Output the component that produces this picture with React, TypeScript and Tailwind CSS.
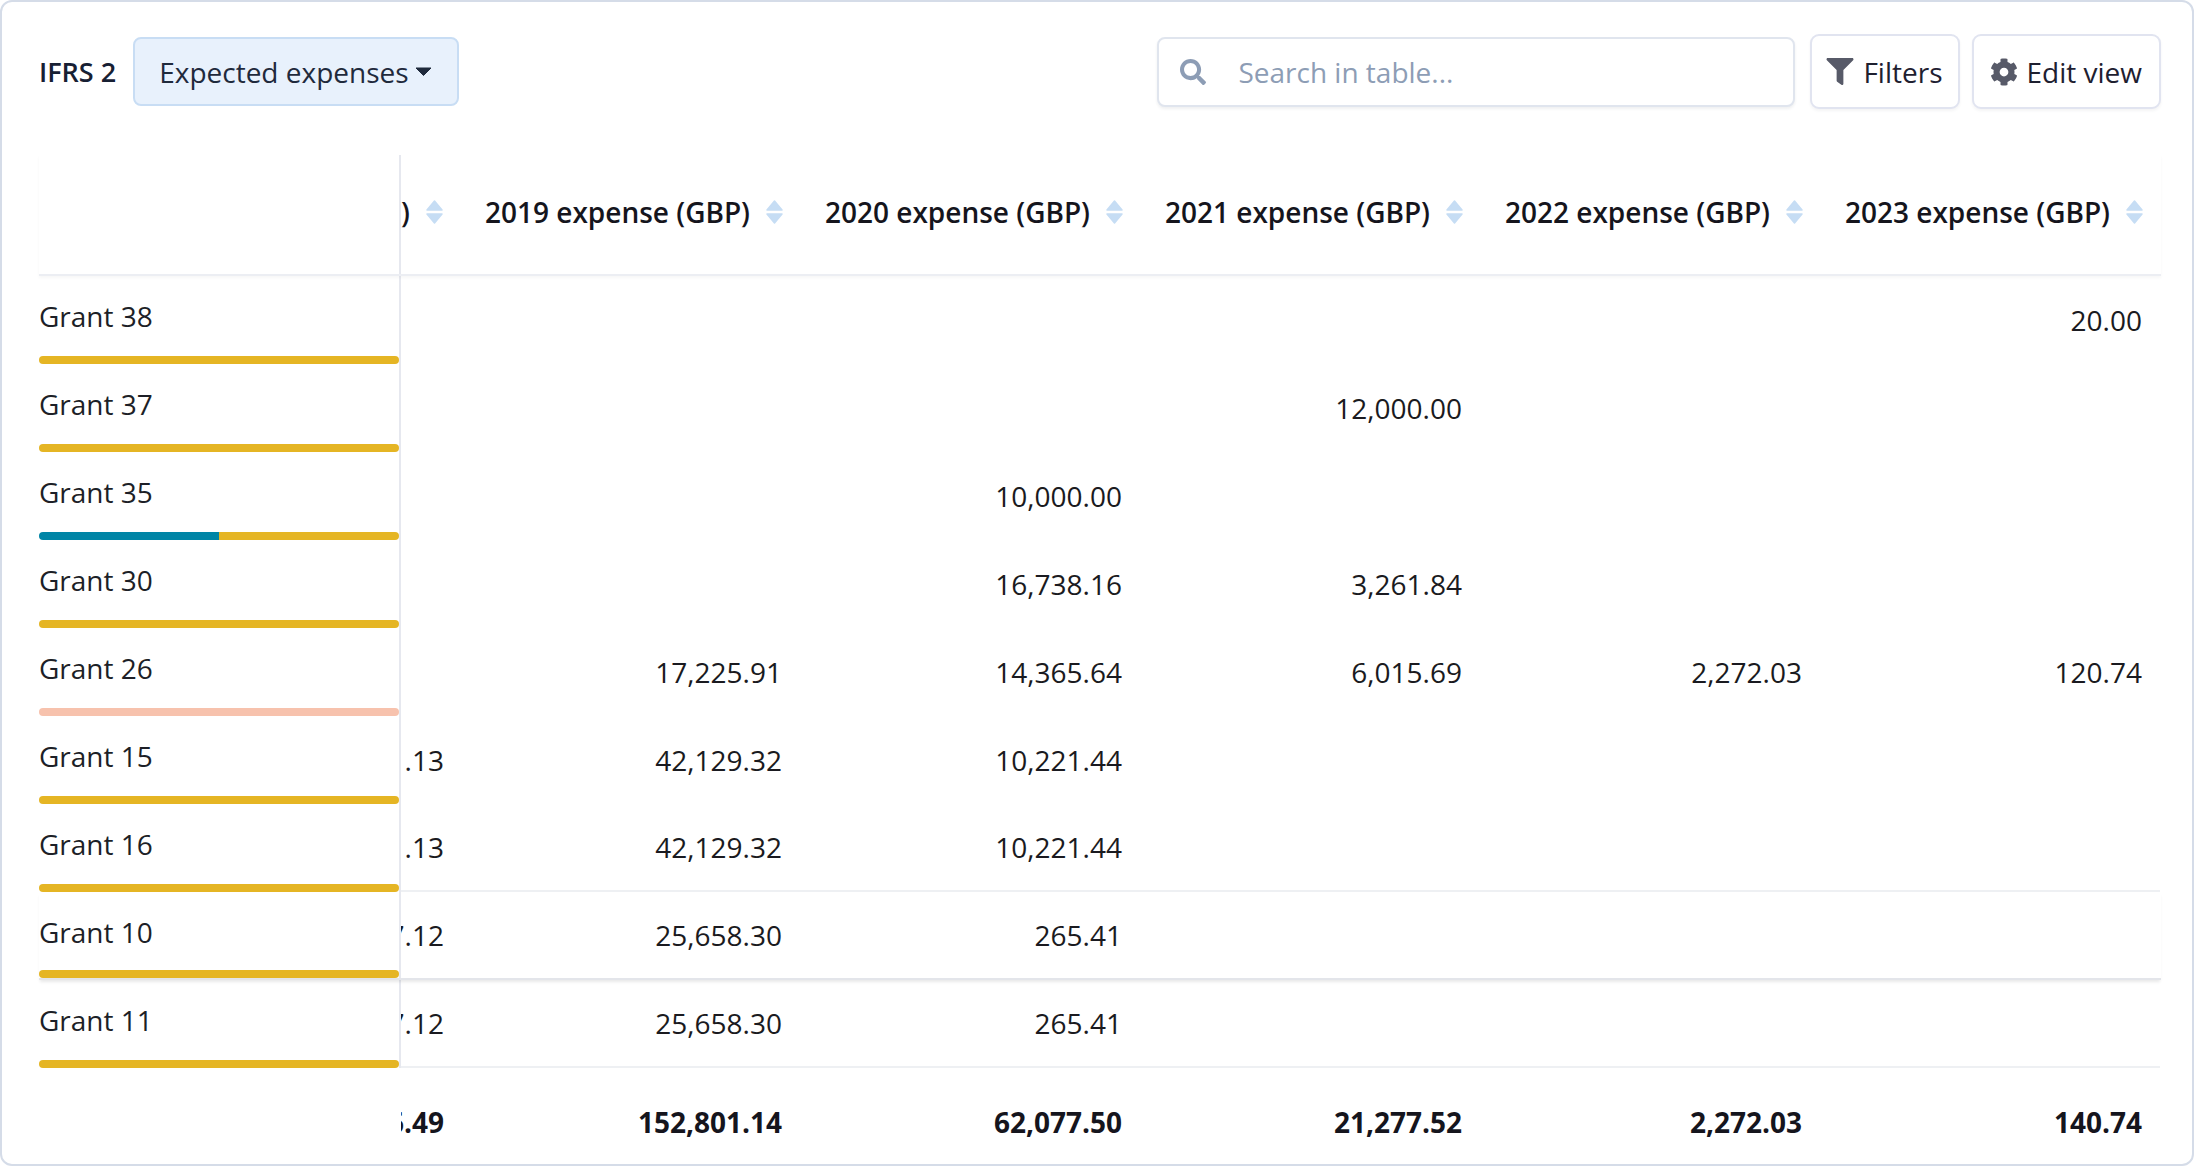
import React from "react";
import { FaSearch, FaFilter, FaCog } from "react-icons/fa";

type Row = {
  name: string;
  bar: [string, number][];
  v: string[];
  line?: "scroll" | "full";
};

const GOLD = "#e5b524";
const TEAL = "#0085a6";
const SALMON = "#f7c2ad";

const headers = [
  "2018 expense (GBP)",
  "2019 expense (GBP)",
  "2020 expense (GBP)",
  "2021 expense (GBP)",
  "2022 expense (GBP)",
  "2023 expense (GBP)",
];

const rows: Row[] = [
  { name: "Grant 38", bar: [[GOLD, 100]], v: ["", "", "", "", "", "20.00"] },
  { name: "Grant 37", bar: [[GOLD, 100]], v: ["", "", "", "12,000.00", "", ""] },
  { name: "Grant 35", bar: [[TEAL, 50], [GOLD, 50]], v: ["", "", "10,000.00", "", "", ""] },
  { name: "Grant 30", bar: [[GOLD, 100]], v: ["", "", "16,738.16", "3,261.84", "", ""] },
  { name: "Grant 26", bar: [[SALMON, 100]], v: ["", "17,225.91", "14,365.64", "6,015.69", "2,272.03", "120.74"] },
  { name: "Grant 15", bar: [[GOLD, 100]], v: ["21,111.13", "42,129.32", "10,221.44", "", "", ""] },
  { name: "Grant 16", bar: [[GOLD, 100]], v: ["21,111.13", "42,129.32", "10,221.44", "", "", ""], line: "scroll" },
  { name: "Grant 10", bar: [[GOLD, 100]], v: ["14,417.12", "25,658.30", "265.41", "", "", ""], line: "full" },
  { name: "Grant 11", bar: [[GOLD, 100]], v: ["14,417.12", "25,658.30", "265.41", "", "", ""], line: "scroll" },
];

const totals = ["71,056.49", "152,801.14", "62,077.50", "21,277.52", "2,272.03", "140.74"];

function SortIcon() {
  return (
    <svg width="17" height="24" viewBox="0 0 17 24" className="shrink-0">
      <path d="M8.5 1 L16 10 L1 10 Z" fill="#c6ddf4" stroke="#c6ddf4" strokeWidth="1.5" strokeLinejoin="round" />
      <path d="M1 14 L16 14 L8.5 23 Z" fill="#c6ddf4" stroke="#c6ddf4" strokeWidth="1.5" strokeLinejoin="round" />
    </svg>
  );
}

function Caret() {
  return (
    <svg width="17" height="9" viewBox="0 0 17 9" className="shrink-0">
      <path d="M1 1 L16 1 L8.5 8.5 Z" fill="#1f2a3c" stroke="#1f2a3c" strokeWidth="1" strokeLinejoin="round" />
    </svg>
  );
}

export default function App() {
  return (
    <div className="h-[1166px] w-full bg-white font-['Open_Sans',sans-serif]">
      <div className="h-full w-full overflow-hidden rounded-[12px] border-2 border-[#d5dce8] bg-white pl-[37px] pr-[31px] pt-[32px]">
        {/* Toolbar */}
        <div className="flex h-[75px] items-center">
          <span className="text-[27px] font-semibold leading-none text-[#172033]">IFRS 2</span>
          <button className="ml-[17px] flex h-[69px] items-center gap-[6px] rounded-[8px] border-2 border-[#c8ddf4] bg-[#e8f1fc] pl-[24px] pr-[25px] text-[28px] text-[#1f2a3c]">
            <span>Expected expenses</span>
            <Caret />
          </button>
          <div className="ml-auto flex h-[70px] w-[638px] items-center rounded-[8px] border-2 border-[#e0e5ee] bg-white pl-[21px] shadow-[0_2px_3px_rgba(30,41,59,0.07)]">
            <FaSearch className="h-[26px] w-[26px] text-[#8d9db5]" />
            <span className="ml-[32px] text-[28px] text-[#8d9db5]">Search in table...</span>
          </div>
          <button className="ml-[15px] flex h-[75px] items-center gap-[9px] rounded-[9px] border-2 border-[#e1e4f0] bg-white pl-[14px] pr-[15px] text-[28px] text-[#1e2030] shadow-[0_2px_3px_rgba(30,41,59,0.05)]">
            <FaFilter className="h-[27px] w-[28px] text-[#575a68]" />
            <span>Filters</span>
          </button>
          <button className="ml-[12px] flex h-[75px] items-center gap-[9px] rounded-[9px] border-2 border-[#e1e4f0] bg-white pl-[16px] pr-[17px] text-[28px] text-[#1e2030] shadow-[0_2px_3px_rgba(30,41,59,0.05)]">
            <FaCog className="h-[28px] w-[28px] text-[#575a68]" />
            <span>Edit view</span>
          </button>
        </div>

        {/* Table */}
        <div className="mt-[46px]">
          {/* Header */}
          <div className="relative z-20 flex h-[121px] border-b-2 border-[#eceef3] shadow-[0_2px_3px_rgba(0,0,0,0.035)]">
            <div className="relative z-10 w-[362px] shrink-0 border-r-2 border-[#e6e8ef] bg-white" />
            <div className="ml-[-281px] flex shrink-0">
              {headers.map((h) => (
                <div
                  key={h}
                  className="flex w-[340px] shrink-0 items-center justify-end gap-[16px] pb-[5px] pr-[17px] text-[28px] font-semibold whitespace-nowrap text-[#15151d]"
                >
                  <span>{h}</span>
                  <SortIcon />
                </div>
              ))}
            </div>
          </div>

          {/* Body */}
          {rows.map((r) => (
            <div
              key={r.name}
              className={
                r.line === "full"
                  ? "relative z-20 flex h-[88px] border-b-2 border-[#e3e5ea] shadow-[0_3px_3px_-1px_rgba(0,0,0,0.09)]"
                  : "flex h-[88px]"
              }
            >
              <div className="relative z-10 flex w-[362px] shrink-0 flex-col border-r-2 border-[#e6e8ef] bg-white pt-[20px]">
                <div className="text-[28px] leading-[40px] text-[#1d1f27]">{r.name}</div>
                <div className="mt-auto flex h-[8px] w-full overflow-hidden rounded-full">
                  {r.bar.map(([c, w], i) => (
                    <div key={i} className="h-full" style={{ backgroundColor: c, width: `${w}%` }} />
                  ))}
                </div>
              </div>
              <div
                className={
                  r.line === "scroll"
                    ? "ml-[-281px] flex shrink-0 border-b-2 border-[#eef0f3]"
                    : "ml-[-281px] flex shrink-0"
                }
              >
                {r.v.map((val, i) => (
                  <div
                    key={i}
                    className={
                      i === 0
                        ? "flex w-[340px] shrink-0 items-center justify-end pr-[16px] text-[28px] whitespace-nowrap text-[#1a1a20]"
                        : "flex w-[340px] shrink-0 items-center justify-end pr-[18px] text-[28px] whitespace-nowrap text-[#1a1a20]"
                    }
                  >
                    {val}
                  </div>
                ))}
              </div>
            </div>
          ))}

          {/* Footer */}
          <div className="flex h-[108px]">
            <div className="relative z-10 w-[362px] shrink-0 border-r-2 border-white bg-white" />
            <div className="ml-[-281px] flex shrink-0">
              {totals.map((val, i) => (
                <div
                  key={i}
                  className={
                    i === 0
                      ? "flex w-[340px] shrink-0 items-center justify-end pr-[16px] text-[28px] font-bold whitespace-nowrap text-[#15151d]"
                      : "flex w-[340px] shrink-0 items-center justify-end pr-[18px] text-[28px] font-bold whitespace-nowrap text-[#15151d]"
                  }
                >
                  {val}
                </div>
              ))}
            </div>
          </div>
        </div>
      </div>
    </div>
  );
}
